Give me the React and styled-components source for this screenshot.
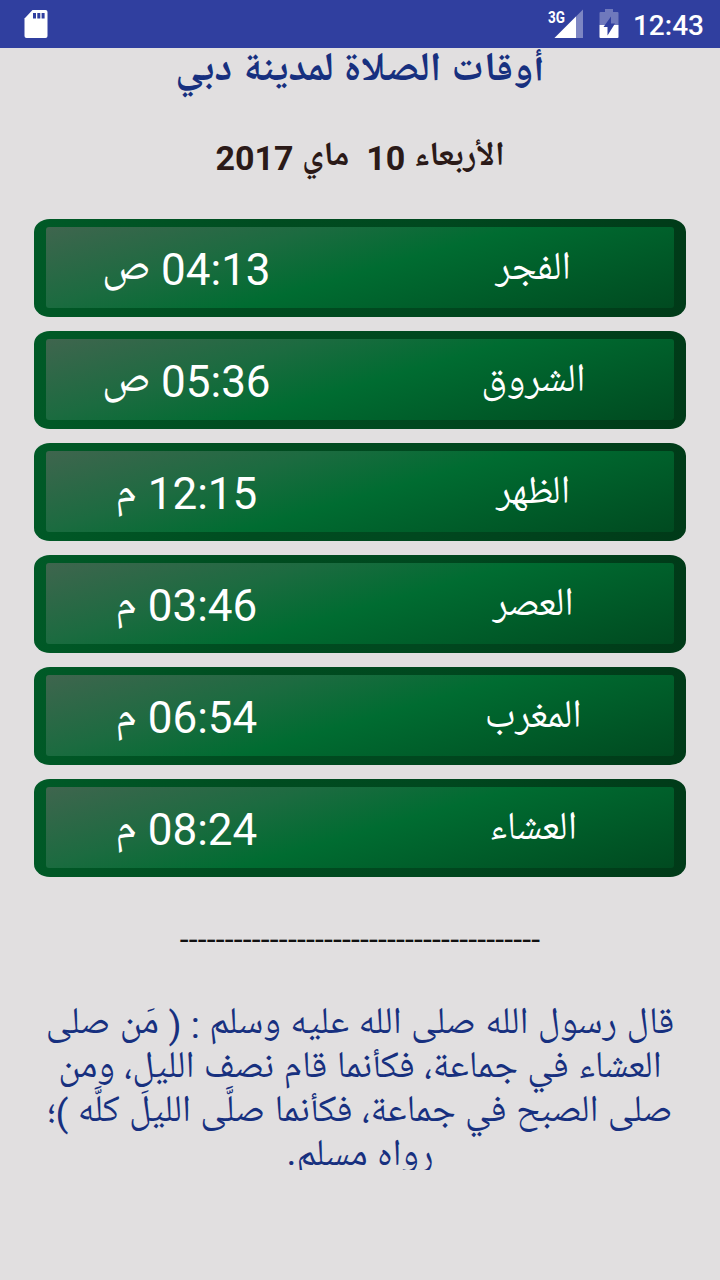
import React from "react";
import styled, { createGlobalStyle } from "styled-components";

const prayers = [
  { name: "الفجر", time: "04:13", period: "ص" },
  { name: "الشروق", time: "05:36", period: "ص" },
  { name: "الظهر", time: "12:15", period: "م" },
  { name: "العصر", time: "03:46", period: "م" },
  { name: "المغرب", time: "06:54", period: "م" },
  { name: "العشاء", time: "08:24", period: "م" },
];

export default function App() {
  return (
    <Screen>
      <GlobalStyle />
      <StatusBar>
        <SdIcon viewBox="0 0 24 28">
          <path
            fill="#fff"
            d="M8.500 0H21.500a2 2 0 0 1 2 2v24a2 2 0 0 1-2 2H2.500a2 2 0 0 1-2-2V8.500z"
          />
          <path
            fill="#303f9f"
            d="M9 3h3v5.500H9zM13.300 3h3v5.500h-3zM17.600 3h3v5.500h-3z"
          />
        </SdIcon>
        <StatusRight>
          <SignalIcon viewBox="0 0 36 32">
            <path fill="#7d86c3" d="M36 1.500V30H7.500z" />
            <path fill="#fff" d="M29 8.500V30H7.500z" />
            <text x="1" y="14.500" textLength="17" lengthAdjust="spacingAndGlyphs">
              3G
            </text>
          </SignalIcon>
          <BatteryIcon viewBox="0 0 20 30">
            <path
              fill="#6f79bc"
              d="M6 0h8v3h4.500a1 1 0 0 1 1 1v12H.5V4a1 1 0 0 1 1-1H6z"
            />
            <path fill="#fff" d="M.5 16h19v12a1 1 0 0 1-1 1h-17a1 1 0 0 1-1-1z" />
            <path fill="#303f9f" d="M12 7.500v7h4L8.500 26.500V18h-4z" />
          </BatteryIcon>
          <Clock>12:43</Clock>
        </StatusRight>
      </StatusBar>
      <Title>أوقات الصلاة لمدينة دبي</Title>
      <DateLine>الأربعاء 10&nbsp; ماي 2017</DateLine>
      <PrayerList>
        {prayers.map((prayer) => (
          <PrayerRow key={prayer.name}>
            <Panel>
              <Name>{prayer.name}</Name>
              <Time>
                {prayer.time} {prayer.period}
              </Time>
            </Panel>
          </PrayerRow>
        ))}
      </PrayerList>
      <Divider>{"-".repeat(40)}</Divider>
      <Hadith>
        <HadithLine>
          قال رسول <Allah>الله</Allah> صلى <Allah>الله</Allah> عليه وسلم : ( مَن
          صلى
        </HadithLine>
        <HadithLine>العشاء في جماعة، فكأنما قام نصف الليل، ومن</HadithLine>
        <HadithLine>صلى الصبح في جماعة، فكأنما صلَّى الليلَ كلَّه )؛</HadithLine>
        <HadithLine>
          رواه مسلم<FullStop>.</FullStop>
        </HadithLine>
      </Hadith>
    </Screen>
  );
}

const GlobalStyle = createGlobalStyle`
  body {
    margin: 0;
    background: #e1dfe0;
  }
`;

const Screen = styled.div`
  width: 720px;
  height: 1280px;
  overflow: hidden;
  display: flex;
  flex-direction: column;
  align-items: center;
  direction: rtl;
  background: #e1dfe0;
  font-family: Roboto, "Noto Naskh Arabic UI", "Noto Naskh Arabic",
    "DejaVu Sans", sans-serif;
  white-space: nowrap;
`;

const StatusBar = styled.div`
  box-sizing: border-box;
  width: 720px;
  height: 48px;
  flex: none;
  padding: 0 16px 0 24px;
  display: flex;
  justify-content: space-between;
  align-items: center;
  direction: ltr;
  background: #303f9f;
`;

const SdIcon = styled.svg`
  width: 24px;
  height: 28px;
`;

const StatusRight = styled.div`
  display: flex;
  align-items: center;
`;

const SignalIcon = styled.svg`
  width: 36px;
  height: 32px;
  margin-right: 16px;

  text {
    font: 700 16px Roboto, sans-serif;
    fill: #fff;
  }
`;

const BatteryIcon = styled.svg`
  width: 20px;
  height: 30px;
  margin-right: 14px;
`;

const Clock = styled.div`
  padding-top: 3px;
  color: #fff;
  font-size: 28px;
  font-weight: 500;
  line-height: 45px;
`;

const Title = styled.div`
  padding-top: 2px;
  height: 44px;
  line-height: 44px;
  color: #17307f;
  font-size: 40.6px;
  font-weight: bold;
`;

const DateLine = styled.div`
  margin-top: 42px;
  height: 44px;
  line-height: 44px;
  color: #2b1a18;
  font-size: 34px;
  font-weight: bold;
`;

const PrayerList = styled.div`
  margin-top: 39px;
  display: flex;
  flex-direction: column;
  gap: 14px;
`;

const PrayerRow = styled.div`
  box-sizing: border-box;
  width: 652px;
  height: 98px;
  padding: 8px 12px;
  border-radius: 16px / 13px;
  background: linear-gradient(
    100deg,
    #005a27 0%,
    #004c20 35%,
    #00481f 60%,
    #003a18 100%
  );
`;

const Panel = styled.div`
  height: 81px;
  display: grid;
  grid-template-columns: 1fr 1fr;
  column-gap: 65px;
  border-radius: 3px;
  color: #fff;
  text-align: center;
  line-height: 81px;
  background: linear-gradient(
    164deg,
    #3f654e 0%,
    #1c6b40 30%,
    #006c31 52%,
    #005e2a 72%,
    #004a20 100%
  );
`;

const Name = styled.div`
  padding-top: 3px;
  font-size: 39.6px;
`;

const Time = styled.div`
  padding: 3px 1px 0 0;
  font-size: 44px;
`;

const Divider = styled.div`
  margin-top: 46px;
  height: 32px;
  line-height: 32px;
  color: #111;
  font-size: 32px;
  letter-spacing: 0.17px;
`;

const Hadith = styled.div`
  margin-top: 48px;
  height: 167px;
  overflow: hidden;
  color: #17307f;
  font-size: 37.7px;
  text-align: center;
`;

const HadithLine = styled.div`
  height: 44px;
  line-height: 44px;
`;

/* the UI cut shortens the second lam, so this word uses the text cut,
   lifted to the same baseline */
const Allah = styled.span`
  font-family: "Noto Naskh Arabic", serif;
  line-height: 0;
  vertical-align: 0.14em;
`;

const FullStop = styled.span`
  line-height: 0;
  vertical-align: 0.14em;
`;
